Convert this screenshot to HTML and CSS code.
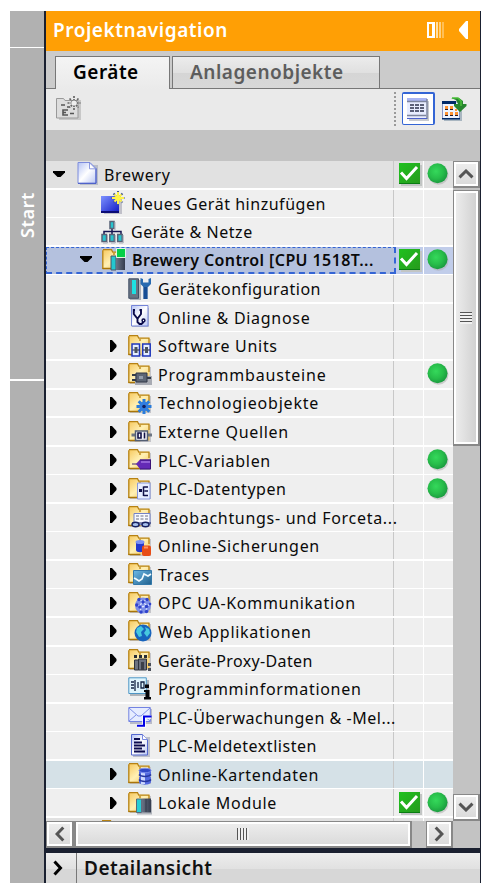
FILE: index.html
```html
<!DOCTYPE html>
<html lang="de">
<head>
<meta charset="utf-8">
<title>Projektnavigation</title>
<link rel="stylesheet" href="styles.css">
</head>
<body>
<svg class="defs" aria-hidden="true">
  <defs>
    <linearGradient id="gold" x1="0" x2="1" y1="0" y2="1"><stop offset="0" stop-color="#f6c75b"/><stop offset=".5" stop-color="#fff0b4"/><stop offset="1" stop-color="#f3c04e"/></linearGradient>
    <linearGradient id="blue" x1="0" x2="1" y1="0" y2="1"><stop offset="0" stop-color="#7d92ff"/><stop offset="1" stop-color="#1119c4"/></linearGradient>
    <linearGradient id="paper" x1="0" x2="1" y1="0" y2="1"><stop offset="0" stop-color="#b4c2f4"/><stop offset=".5" stop-color="#fff"/><stop offset="1" stop-color="#b9c6f3"/></linearGradient>
    <linearGradient id="green" x1="0" x2="1" y1="0" y2="1"><stop offset="0" stop-color="#1fc11f"/><stop offset="1" stop-color="#279a1d"/></linearGradient>
    <radialGradient id="ball" cx=".42" cy=".4" r=".6"><stop offset="0" stop-color="#35d95b"/><stop offset=".6" stop-color="#27bd4a"/><stop offset="1" stop-color="#1c9c40"/></radialGradient>
    <linearGradient id="sky" x1="0" x2="1" y1="0" y2="1"><stop offset="0" stop-color="#6db9e6"/><stop offset="1" stop-color="#20608d"/></linearGradient>
    <linearGradient id="slate"><stop offset="0" stop-color="#6c7688"/><stop offset="1" stop-color="#343c4e"/></linearGradient>
  </defs>
  <symbol id="folder" viewBox="0 0 24 24"><path d="M2 5h21v17H2z" fill="#c5c5ca"/><path d="M.8 20.500V1.800H2L3 1.200h6l1.500 2.500h11v16.800z" fill="url(#gold)"/><path d="M.8 21V2.200M1 1.700h8.500l1.300 2.500H21.500M12 5v2M21 4v6" fill="none" stroke="#b78213" stroke-width="1.300"/><path d="M.5 20.500h12" stroke="#a97508" stroke-width="1.500"/></symbol>
  <symbol id="page" viewBox="0 0 24 24"><path d="M3 3h18v20H3z" fill="#b9bdc8"/><path d="M1 .5h12l6 6v14.800H1z" fill="url(#paper)" stroke="#7d8cdc"/><path d="M1 21.300h18V6.500" fill="none" stroke="#4055c6"/><path d="M12.500.8v6h6z" fill="#fff" stroke="#7182d8" stroke-width=".8"/></symbol>
  <symbol id="newdev" viewBox="0 0 24 24"><path d="M3 8h18v15H3z" fill="#c0c0c9"/><path d="M0 5h18v17H0z" fill="url(#blue)"/><path d="M0 21h18" stroke="#0b0b76" stroke-width="2"/><path d="M17 0v14M10.500 7h13M12.500 2.500l9 9M21.500 2.500l-9 9" stroke="#44598c" stroke-width="2" stroke-dasharray="2 1"/><path d="M17 1v12M11 7h12M13.500 3.500l7 7M20.500 3.500l-7 7" stroke="#fff44a" stroke-width="2"/></symbol>
  <symbol id="net" viewBox="0 0 24 24"><path d="M11 8v6M3 14v-2.500h17V14" fill="none" stroke="#151551" stroke-width="1.500"/><g fill="#27c4cf" stroke="#586377" stroke-width="1.500"><path d="M9 1.500h4v7H9zM1 14.500h4.500v7H1zM8.800 14.500h4.500v7H8.800zM16.700 14.500h4.500v7h-4.500z"/></g><path d="M14 2v8M6.500 15v8H2M14.300 15v8H10M22.200 15v8H18" stroke="#aaaeb9" fill="none"/></symbol>
  <symbol id="cpu" viewBox="0 0 24 24"><use href="#folder"/><path d="M9 8h5v14H9z" fill="#24c7cf" stroke="#485568"/><path d="M14 10h9v12h-9z" fill="url(#slate)"/><path d="M14.500.500h9v9h-9z" fill="#04cf48" stroke="#fff" stroke-width=".8"/></symbol>
  <symbol id="config" viewBox="0 0 24 24"><path d="M2 22h10V3" fill="none" stroke="#aeb2b9" stroke-width="2"/><path d="M.8 1.800h9.700v19.500H.8z" fill="#687483" stroke="#435165"/><path d="M4 3h4v14H4z" fill="#1ee0e2"/><path d="M17.500 9v13" stroke="#174e95" stroke-width="4.300"/><path d="M12.500 1v6l3 3h4.500l3-3V1l-2.500 1v3.500h-5.500V2z" fill="#286ab0"/></symbol>
  <symbol id="diag" viewBox="0 0 24 24"><path d="M4 3h17v19H4z" fill="#bfc1ca"/><path d="M3.500.5h16.500v20.500H3.500z" fill="url(#paper)" stroke="#7585d8"/><path d="M7 5H5.800v4l3.200 4h1l3-4V5h-1.500M9.500 13v4l2 2h2l2-2" fill="none" stroke="#090948" stroke-width="1.900"/><circle cx="15.500" cy="15.500" r="1.400" fill="#fff" stroke="#090948" stroke-width="1.500"/></symbol>
  <symbol id="units" viewBox="0 0 24 24"><use href="#folder"/><g fill="#e6eeff" stroke="#2037bb" stroke-width="1.500"><path d="M4 10h7.500v12H4zM14.700 10h7.500v12h-7.500z"/></g><path d="M4.500 16h7M15 16h7" stroke="#223"/><path d="M6.500 13h3v6h-3zM17 13h3v6h-3z" fill="#4b535f"/></symbol>
  <symbol id="blocks" viewBox="0 0 24 24"><use href="#folder"/><path d="M7 14h17v9H7z" fill="#a8abb3"/><path d="M8 11h11v9H8z" fill="#5d6675" stroke="#303747"/><path d="M4 13h4M4 18h4M19 16h4" stroke="#333c49" stroke-width="2"/><path d="M11 14h4v3h-4z" fill="#929caa"/></symbol>
  <symbol id="tech" viewBox="0 0 24 24"><use href="#folder"/><path d="M16 8v15M8.500 15.500h15M10.700 10.200l10.600 10.600M21.300 10.200L10.700 20.800" stroke="#297cdb" stroke-width="3"/><circle cx="16" cy="15.500" r="4.700" fill="#317ee0"/><circle cx="16" cy="15.500" r="1.800" fill="#102061"/></symbol>
  <symbol id="extern" viewBox="0 0 24 24"><use href="#folder"/><path d="M3.500 15H24" stroke="#6d7582" stroke-width="3"/><path d="M7.500 11h12v9.500h-12z" fill="#f6f6fa" stroke="#535e73" stroke-width="1.500"/><path d="M10 13h3v5h-3zM16.500 12.500v6" fill="none" stroke="#101045" stroke-width="1.600"/></symbol>
  <symbol id="tags" viewBox="0 0 24 24"><use href="#folder"/><path d="M4 16h7" stroke="#3c1f71"/><path d="M8 16l4-4.500h11v9.500H12z" fill="#6429b6"/><path d="M12 12h11M22.500 12v9H12" fill="none" stroke="#3a1276"/><path d="M13 14h9" stroke="#9260d5" stroke-width="2"/></symbol>
  <symbol id="types" viewBox="0 0 24 24"><use href="#folder"/><path d="M9.500 6h12.500v16H9.500z" fill="#e7edff" stroke="#8797de"/><path d="M11 13.500h3" stroke="#101048" stroke-width="3"/><path d="M15.500 9.500v9.500M15.500 10h4.500M16.500 14h3.500M15.500 18.500h4.500" fill="none" stroke="#101048" stroke-width="1.500"/></symbol>
  <symbol id="watch" viewBox="0 0 24 24"><use href="#folder"/><path d="M6 8.500h16v11H6z" fill="#f7f9ff" stroke="#7382c8"/><path d="M8 11h12M8 14h12" stroke="#6d7184" stroke-dasharray="3 1.500"/><path d="M4 18h19" stroke="#172161"/><ellipse cx="7.500" cy="19.500" rx="3.500" ry="2.300" fill="#a8c1ec" stroke="#172161" stroke-width="1.400"/><ellipse cx="17.500" cy="19.500" rx="3.500" ry="2.300" fill="#a8c1ec" stroke="#172161" stroke-width="1.400"/></symbol>
  <symbol id="backup" viewBox="0 0 24 24"><use href="#folder"/><path d="M8 8v8c0 3 8 3 8 0V8z" fill="#2439cf"/><ellipse cx="12" cy="8" rx="4.500" ry="2" fill="#7b91f4"/><rect x="14" y="11.500" width="9" height="10.500" rx="2" fill="#e84d16"/><path d="M16 13.500h4" stroke="#ff9360" stroke-width="2"/></symbol>
  <symbol id="trace" viewBox="0 0 24 24"><use href="#folder"/><path d="M5.500 8.500h18v14h-18z" fill="url(#sky)" stroke="#3378a9"/><path d="M6 16l2 1 3 2 3-2 2-5 2 1 2 1 3-2" fill="none" stroke="#f2fbff" stroke-width="1.700"/></symbol>
  <symbol id="opc" viewBox="0 0 24 24"><use href="#folder"/><circle cx="15" cy="14.500" r="8" fill="#7d8ee6"/><path d="M11 8l4 3 4-3M8 14l4 1 2-4M12 15l1 6M15 11l4 4 3-2M19 15l-1 6M12 16l7-1" fill="none" stroke="#dfe6ff" stroke-width="1.300"/><g fill="#2f42cc"><circle cx="11" cy="8.500" r="1.700"/><circle cx="19" cy="8.500" r="1.700"/><circle cx="15" cy="11" r="1.800"/><circle cx="8.800" cy="14" r="1.700"/><circle cx="12" cy="16" r="1.800"/><circle cx="18.500" cy="15.500" r="1.800"/><circle cx="22" cy="13" r="1.300"/><circle cx="13" cy="21" r="1.700"/><circle cx="18.500" cy="20.500" r="1.700"/></g></symbol>
  <symbol id="web" viewBox="0 0 24 24"><use href="#folder"/><circle cx="15" cy="14" r="8.500" fill="#1764bd"/><path d="M9 9l4-2 3 3-3 3 1 4-3 1-3-5zM17 8l4 2 1 4-3 4-3-4 2-3z" fill="#46c8df"/></symbol>
  <symbol id="proxy" viewBox="0 0 24 24"><use href="#folder"/><path d="M6 7h3v3H6zM11 7h3v3h-3zM16 7h3v3h-3z" fill="#272d35"/><path d="M6.500 12h4v10h-4zM10.500 11h8v11h-8z" fill="#6d7380" stroke="#30343e"/><path d="M13 14h3v8h-3z" fill="#3a3e48"/><path d="M20 15h3v3h-3zM20 20h3v3h-3z" fill="#4a4f59"/></symbol>
  <symbol id="info" viewBox="0 0 24 24"><path d="M2 3h19v16H2z" fill="#aeb4ba"/><path d="M.8.800h17.500v15.700H.8z" fill="#dff5fd" stroke="#4d96c6"/><path d="M3 5h3M3 8h3M3 11h3M7 3v11M10 5v6M13 5h3v6h-3z" fill="none" stroke="#152444" stroke-width="1.300"/><path d="M17 7.500h4v3.500h-4zM16 13h5.500v7H23v2.500h-7V20h1.500v-5H16z" fill="#050508"/></symbol>
  <symbol id="mail" viewBox="0 0 24 24"><path d="M2 4h22v15H2z" fill="#b9bbc9"/><path d="M.8 2.500h21.500v14H.8z" fill="#e6ecff" stroke="#7383e2"/><path d="M1 3l9 8h3l9-8M1 16l7-6M22 16l-7-6" fill="none" stroke="#7f90e8"/><path d="M9 21h7v-9h7" fill="none" stroke="#fff" stroke-width="3.500"/><path d="M9 20.800h7V11.500h7.500" fill="none" stroke="#0000e5" stroke-width="2"/></symbol>
  <symbol id="text" viewBox="0 0 24 24"><path d="M5 3h17v20H5z" fill="#bdc0cb"/><path d="M3.500.5h11l5 5V21h-16z" fill="url(#paper)" stroke="#5468cf"/><path d="M14.500.8v4.700h5" fill="#fff" stroke="#7a8ae0"/><path d="M6 5h6M6 8.500h8M6 11.500h11M6 14.500h8M6 17.500h11" stroke="#0b0b4d" stroke-width="1.800"/></symbol>
  <symbol id="card" viewBox="0 0 24 24"><use href="#folder"/><path d="M11 9v3.500l1 1.500-1 1.500V20c0 3.500 12 3.500 12 0v-4.500L22 14l1-1.500V9z" fill="#5269df"/><path d="M13 10h4v12h-4z" fill="#cbd7ff"/><path d="M11 12.500c2 2.500 10 2.500 12 0M11 17.500c2 2.500 10 2.500 12 0" fill="none" stroke="#25369f" stroke-width="1.500"/><ellipse cx="17" cy="8.500" rx="6" ry="2.300" fill="#3149c8" stroke="#7d90ef"/></symbol>
  <symbol id="local" viewBox="0 0 24 24"><use href="#folder"/><path d="M9 22.500h15V9" stroke="#b0b4bb" stroke-width="2" fill="none"/><path d="M8.500 8h5v13.500h-5z" fill="#27ced5" stroke="#56687b"/><path d="M13.500 7.500h9.500v14h-9.500z" fill="url(#slate)"/><path d="M18 8v13" stroke="#313b4a"/></symbol>
  <symbol id="check" viewBox="0 0 23 23"><path d="M2 2h21v21H2z" fill="#c2c5c4"/><path d="M0 0h21v21H0z" fill="url(#green)"/><path d="M0 20.500h21" stroke="#087c12"/><path d="M2 9.500l5.500 6L18 4" fill="none" stroke="#fff" stroke-width="3"/></symbol>
  <symbol id="dot" viewBox="0 0 23 23"><circle cx="11.500" cy="11.700" r="10" fill="#aaa" opacity=".5"/><circle cx="10.500" cy="10.300" r="10" fill="url(#ball)"/></symbol>
  <symbol id="open" viewBox="0 0 12 7"><path d="M0 0h12v1.500L7.500 6h-3L0 1.500z"/></symbol>
  <symbol id="closed" viewBox="0 0 7 12"><path d="M0 0h2l4.500 5v2L2 12H0z"/></symbol>
  <symbol id="chev" viewBox="0 0 16 10"><path d="M1.500 8.300L8 2l6.500 6.300" fill="none" stroke="#555" stroke-width="3"/></symbol>
</svg>

<div class="window">
  <aside class="strip">
    <div class="strip-head"></div>
    <div class="strip-start"><span>Start</span></div>
    <div class="strip-rest"></div>
  </aside>
  <main class="panel">
    <header class="title">
      <h1>Projektnavigation</h1>
      <svg width="17" height="16" viewBox="0 0 17 16"><path d="M1 1h5v14H1z" fill="none" stroke="#fff" stroke-width="2"/><path d="M7 0h1v16H7z" fill="#fff"/><path d="M9 0h2v16H9z" fill="#ffe0a8"/><path d="M12 0h2v16h-2z" fill="#ffd080"/><path d="M15 0h2v16h-2z" fill="#ffbf56"/></svg>
      <svg class="collapse" width="9" height="18" viewBox="0 0 9 18"><path d="M9 0v18H7L0 10V8l7-8z" fill="#fff"/></svg>
    </header>
    <nav class="tabs"><div class="tab active">Geräte</div><div class="tab">Anlagenobjekte</div></nav>
    <div class="toolbar">
      <svg class="add" width="25" height="25" viewBox="0 0 25 25"><path d="M3 4h22v20H3z" fill="#c8c8c8"/><path d="M.500 22V2.500h7L9 4.500h13V22z" fill="#ddd" stroke="#999"/><path d="M5 9h4M11 11h3M12 14H7v5h5M7 16.500h3M14 17.500h4" stroke="#555" stroke-width="1.600" fill="none"/><path d="M18 0v14M11.500 7h13M13.500 2.500l9 9M22.500 2.500l-9 9" stroke="#666" stroke-width="1.700" stroke-dasharray="2 1"/><circle cx="18" cy="7" r="2.600" fill="#eee"/></svg>
      <i class="grip"></i>
      <div class="toggle"><svg width="22" height="23" viewBox="0 0 22 23"><path d="M2 3h20v20H2z" fill="#c7cad0"/><path d="M0 0h20v20H0z" fill="#e8edff"/><path d="M0 0h20v3H0z" fill="#aab5f3"/><path d="M0 3.500h20M20 1v20M0 17.500h19" stroke="#7d859d" stroke-width="1.500"/><path d="M3 7h15M3 10h15M3 13h15" stroke="#5b6078" stroke-width="2" stroke-dasharray="4 1"/><path d="M0 20.500h20" stroke="#4c60cb"/></svg></div>
      <svg class="export" width="25" height="24" viewBox="0 0 25 24"><path d="M2 6h18v18H2z" fill="#a9b6c1"/><path d="M.500 5h17v16.500H.500z" fill="#edf4ff" stroke="#8795c4"/><path d="M0 4h14v3H0zM0 21h18v1.500H0z" fill="#002a69"/><path d="M3 9h3v3H3zM8 9h3v3H8zM13 12h2v2h-2zM3 15h3v3H3zM8 15h3v3H8zM13 15h3v3h-3z" fill="#ff9432"/><path d="M3 12.500h3M8 12.500h3M3 18.500h3M8 18.500h3M13 18.500h3" stroke="#291e29"/><path d="M9 1h8l4 3v3h3.500v2L18 15l-6-6V7h4L14 3z" fill="#26852f"/><path d="M10 1h6l3 3v5" fill="none" stroke="#49bf38" stroke-width="1.500"/></svg>
    </div>
    <div class="column-head"></div>
    <div class="body">
      <section class="tree">
        <div class="row l0"><div class="name"><svg class="arr open"><use href="#open"/></svg><svg class="ico"><use href="#page"/></svg><span>Brewery</span></div><div class="cell"><svg><use href="#check"/></svg></div><div class="cell"><svg><use href="#dot"/></svg></div></div>
        <div class="row l1"><div class="name tight"><svg class="ico"><use href="#newdev"/></svg><span>Neues Gerät hinzufügen</span></div><div class="cell"></div><div class="cell"></div></div>
        <div class="row l1"><div class="name tight"><svg class="ico"><use href="#net"/></svg><span>Geräte &amp; Netze</span></div><div class="cell"></div><div class="cell"></div></div>
        <div class="row l1 selected"><div class="name"><svg class="arr open"><use href="#open"/></svg><svg class="ico"><use href="#cpu"/></svg><span>Brewery Control [CPU 1518T...</span></div><div class="cell"><svg><use href="#check"/></svg></div><div class="cell"><svg><use href="#dot"/></svg></div></div>
        <div class="row"><div class="name tight"><svg class="ico"><use href="#config"/></svg><span>Gerätekonfiguration</span></div><div class="cell"></div><div class="cell"></div></div>
        <div class="row"><div class="name"><svg class="ico"><use href="#diag"/></svg><span>Online &amp; Diagnose</span></div><div class="cell"></div><div class="cell"></div></div>
        <div class="row"><div class="name"><svg class="arr"><use href="#closed"/></svg><svg class="ico"><use href="#units"/></svg><span>Software Units</span></div><div class="cell"></div><div class="cell"></div></div>
        <div class="row"><div class="name wide"><svg class="arr"><use href="#closed"/></svg><svg class="ico"><use href="#blocks"/></svg><span>Programmbausteine</span></div><div class="cell"></div><div class="cell"><svg><use href="#dot"/></svg></div></div>
        <div class="row"><div class="name wide"><svg class="arr"><use href="#closed"/></svg><svg class="ico"><use href="#tech"/></svg><span>Technologieobjekte</span></div><div class="cell"></div><div class="cell"></div></div>
        <div class="row"><div class="name"><svg class="arr"><use href="#closed"/></svg><svg class="ico"><use href="#extern"/></svg><span>Externe Quellen</span></div><div class="cell"></div><div class="cell"></div></div>
        <div class="row"><div class="name"><svg class="arr"><use href="#closed"/></svg><svg class="ico"><use href="#tags"/></svg><span>PLC-Variablen</span></div><div class="cell"></div><div class="cell"><svg><use href="#dot"/></svg></div></div>
        <div class="row"><div class="name tight"><svg class="arr"><use href="#closed"/></svg><svg class="ico"><use href="#types"/></svg><span>PLC-Datentypen</span></div><div class="cell"></div><div class="cell"><svg><use href="#dot"/></svg></div></div>
        <div class="row"><div class="name"><svg class="arr"><use href="#closed"/></svg><svg class="ico"><use href="#watch"/></svg><span>Beobachtungs- und Forceta...</span></div><div class="cell"></div><div class="cell"></div></div>
        <div class="row"><div class="name"><svg class="arr"><use href="#closed"/></svg><svg class="ico"><use href="#backup"/></svg><span>Online-Sicherungen</span></div><div class="cell"></div><div class="cell"></div></div>
        <div class="row"><div class="name"><svg class="arr"><use href="#closed"/></svg><svg class="ico"><use href="#trace"/></svg><span>Traces</span></div><div class="cell"></div><div class="cell"></div></div>
        <div class="row"><div class="name"><svg class="arr"><use href="#closed"/></svg><svg class="ico"><use href="#opc"/></svg><span>OPC UA-Kommunikation</span></div><div class="cell"></div><div class="cell"></div></div>
        <div class="row"><div class="name"><svg class="arr"><use href="#closed"/></svg><svg class="ico"><use href="#web"/></svg><span>Web Applikationen</span></div><div class="cell"></div><div class="cell"></div></div>
        <div class="row"><div class="name tighter"><svg class="arr"><use href="#closed"/></svg><svg class="ico"><use href="#proxy"/></svg><span>Geräte-Proxy-Daten</span></div><div class="cell"></div><div class="cell"></div></div>
        <div class="row"><div class="name"><svg class="ico"><use href="#info"/></svg><span>Programminformationen</span></div><div class="cell"></div><div class="cell"></div></div>
        <div class="row"><div class="name tight"><svg class="ico"><use href="#mail"/></svg><span>PLC-Überwachungen &amp; -Mel...</span></div><div class="cell"></div><div class="cell"></div></div>
        <div class="row"><div class="name tight"><svg class="ico"><use href="#text"/></svg><span>PLC-Meldetextlisten</span></div><div class="cell"></div><div class="cell"></div></div>
        <div class="row hover"><div class="name"><svg class="arr"><use href="#closed"/></svg><svg class="ico"><use href="#card"/></svg><span>Online-Kartendaten</span></div><div class="cell"></div><div class="cell"></div></div>
        <div class="row"><div class="name"><svg class="arr"><use href="#closed"/></svg><svg class="ico"><use href="#local"/></svg><span>Lokale Module</span></div><div class="cell"><svg><use href="#check"/></svg></div><div class="cell"><svg><use href="#dot"/></svg></div></div>
        <div class="row l1 next"><div class="name"><svg class="ico"><use href="#folder"/></svg></div><div class="cell"></div><div class="cell"></div></div>
      </section>
      <div class="vbar">
        <div class="btn"><svg><use href="#chev"/></svg></div>
        <div class="btn vthumb"><i class="lines"></i></div>
        <div class="btn down"><svg><use href="#chev"/></svg></div>
      </div>
    </div>
    <div class="hbar">
      <div class="btn left"><svg><use href="#chev"/></svg></div>
      <div class="btn hthumb"><i class="lines"></i></div>
      <div class="btn right"><svg><use href="#chev"/></svg></div>
    </div>
    <footer class="detail"><div class="expand"><svg width="10" height="16" viewBox="0 0 10 16"><path d="M1.500 1.500L7.500 8l-6 6.500" fill="none" stroke="#000" stroke-width="3"/></svg></div><h2>Detailansicht</h2></footer>
  </main>
</div>
</body>
</html>
```
FILE: styles.css
```css
* { box-sizing: border-box; }
body { margin: 0; background: #fff; font-family: "Noto Sans", "Open Sans", sans-serif; color: #0a0a0a; }
svg { display: block; flex: none; }
.defs { position: absolute; width: 0; height: 0; }
h1, h2 { margin: 0; font-weight: 600; }

.window { display: flex; width: 471px; height: 872px; margin: 11px 0 0 10px; }
.strip { width: 34px; display: flex; flex-direction: column; gap: 1px; }
.strip > div { background: #b1b1b1; }
.strip-head { height: 36px; }
.strip-start { height: 331px; margin-bottom: 1px; display: flex; justify-content: center; padding-top: 141px; }
.strip-start span { writing-mode: vertical-rl; transform: rotate(180deg); height: 49px; color: #fff; font-size: 18px; font-weight: 600; line-height: 34px; letter-spacing: .6px; }
.strip-rest { flex: 1; }

.panel { flex: 1; display: flex; flex-direction: column; border-left: 2px solid #1a2030; border-right: 1px solid #1a2030; min-width: 0; }
.title { height: 40px; background: #ff9f05; color: #fff; display: flex; align-items: center; padding: 0 12px 3px 7px; }
.title h1 { flex: 1; font-size: 19px; line-height: 30px; letter-spacing: .55px; }
.collapse { margin-left: 15px; }
.tabs { height: 38px; background: #cbcbcb; display: flex; gap: 2px; padding: 5px 0 0 9px; border-bottom: 1px solid #777; }
.tab { width: 208px; height: 32px; border: 1px solid #777; border-bottom: 0; padding-left: 17px; font-size: 19px; font-weight: 600; line-height: 30px; letter-spacing: .5px; color: #5d5d5d; background: linear-gradient(#ececec, #e0e0e0 50%, #d5d5d5 51%, #d8d8d8); }
.tab.active { width: 115px; height: 33px; color: #000; background: linear-gradient(#f4f4f4, #eaeaea); }
.toolbar { height: 41px; background: #eaeaea; display: flex; align-items: center; padding: 0 13px 1px 10px; }
.add { margin-bottom: 1px; }
.grip { width: 2px; height: 35px; margin-left: auto; margin-right: 6px; background: repeating-linear-gradient(#999 0 2px, transparent 2px 4px); }
.toggle { width: 33px; height: 33px; margin: 0 7px 1px 0; border: 2px solid #3465d5; border-width: 2px 2px 1px 1px; border-radius: 2px; background: #fff; display: flex; justify-content: center; align-items: center; }
.column-head { height: 31px; background: #c3c3c3; }

.body { height: 660px; display: flex; }
.tree { width: 407px; background: #fff; display: flex; flex-direction: column; gap: 1.6px; overflow: hidden; }
.row { height: 26.97px; flex: none; display: grid; grid-template: 100% / 348px 29px 30px; background: #fff; }
.name { position: relative; z-index: 1; background: #efefef; border-right: 1px solid #c8c8c8; display: flex; align-items: center; padding-left: 64px; white-space: nowrap; font-size: 16px; letter-spacing: .7px; line-height: 24px; }
.name.tight { letter-spacing: .53px; }
.name.tighter { letter-spacing: .35px; }
.name.wide { letter-spacing: .8px; }
.name span { margin-left: 6px; padding-top: 1px; }
.arr { width: 7px; height: 12px; margin-right: 11px; }
.ico { width: 24px; height: 24px; margin-left: 18px; }
.arr + .ico { margin-left: 0; }
.arr.open { width: 12px; height: 7px; }
.l1 .name { padding-left: 37px; }
.l1 .arr { margin: 0 9px 0 -3px; }
.l1 .arr + .ico { margin-left: 1px; }
.l0 .name { padding-left: 7px; }
.l0 .arr { margin-right: 12px; }
.l0 .name span { margin-left: 3px; }
.l1 .name:not(:has(.arr)) .ico { margin-left: 18px; }
.cell { background: #efefef; display: flex; align-items: center; padding-left: 5px; }
.cell + .cell { border-left: 1px solid #fff; padding-left: 3px; }
.cell svg { width: 23px; height: 23px; margin-top: 1px; }
.l0 .name, .l0 .cell, .next .name, .next .cell { background: #e1e1e1; }
.selected .name { background: #b4c1de; border: 1px dashed #3465d5; border-width: 1px 2px 2px 1px; font-weight: 600; letter-spacing: .4px; padding-left: 36px; margin-right: -2px; }
.selected .cell { background: #c1cdea; }
.hover .name, .hover .cell { background: #d5e1e7; }

.btn { border: 1px solid #888; border-right-width: 2px; border-bottom-width: 2px; box-shadow: inset 0 0 0 2px #fff; background: linear-gradient(#eee, #d9d9d9); display: flex; align-items: center; justify-content: center; }
.btn svg { width: 16px; height: 10px; }
.vbar { width: 27px; background: #c3c3c3; display: flex; flex-direction: column; }
.vbar .btn { height: 27px; }
.vbar .vthumb { height: 256px; margin-top: 2px; background: linear-gradient(90deg, #eee, #cfcfcf); }
.vbar .down { margin-top: auto; }
.down svg { transform: rotate(180deg); }
.lines { width: 12px; height: 12px; background: repeating-linear-gradient(#555 0 1px, #f1f1f1 1px 3px); }
.hbar { height: 27px; background: #c3c3c3; display: flex; }
.hbar .btn { width: 28px; }
.hbar .hthumb { width: 338px; border-left-width: 2px; }
.hthumb .lines { background: repeating-linear-gradient(90deg, #555 0 1px, #f1f1f1 1px 3px); }
.hbar .right { width: 27px; margin-left: 14px; }
.left svg { transform: rotate(-90deg); }
.right svg { transform: rotate(90deg); }

.detail { height: 35px; border-top: 5px solid #1a2030; display: flex; background: linear-gradient(#ededed, #e1e1e1 53%, #d7d7d7 54%); }
.expand { width: 31px; border-right: 1px solid #777; padding: 7px 0 0 7px; }
.detail h2 { padding-left: 7px; font-size: 19px; line-height: 30px; letter-spacing: .5px; color: #111; }
```
